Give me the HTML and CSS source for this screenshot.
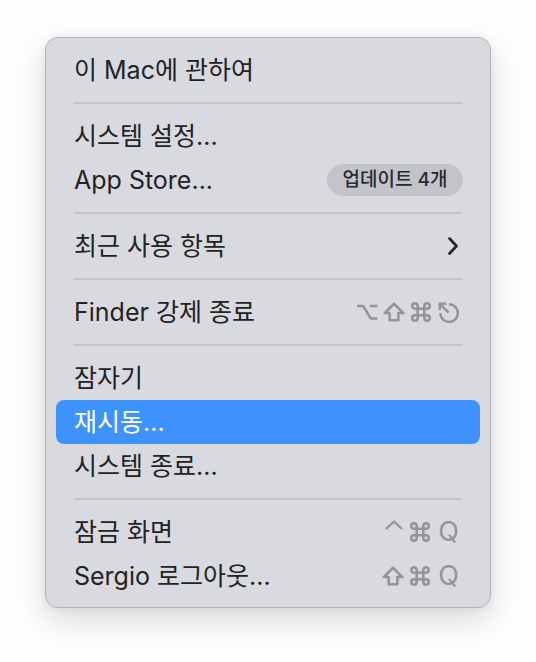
FILE: index.html
```html
<!DOCTYPE html>
<html lang="ko">
<head>
<meta charset="utf-8">
<title>Apple menu</title>
<link rel="stylesheet" href="styles.css">
</head>
<body>
<div class="stage">
<div class="menu">
  <div class="item"><span class="label">이 Mac에 관하여</span></div>
  <div class="sep"></div>
  <div class="item"><span class="label">시스템 설정...</span></div>
  <div class="item"><span class="label">App Store...</span><span class="badge">업데이트 4개</span></div>
  <div class="sep"></div>
  <div class="item"><span class="label">최근 사용 항목</span>
    <svg class="chev" viewBox="0 0 12 20" width="12" height="20"><path d="M2.5 2.5 L9.5 10 L2.5 17.5"/></svg>
  </div>
  <div class="sep"></div>
  <div class="item"><span class="label">Finder 강제 종료</span>
    <span class="keys">
      <svg class="key" viewBox="0 0 20 20" width="22" height="22"><path d="M1 4.5 H6.5 L13.5 16 H19.5 M12.5 4.5 H19.5"/></svg>
      <svg class="key" viewBox="0 0 20 20" width="22" height="22"><path d="M10 2.5 L18.5 11 H14 V17.5 H6 V11 H1.5 Z"/></svg>
      <svg class="key" viewBox="0 0 20 20" width="22" height="22"><path d="M7 7V4.5A2.5 2.5 0 1 0 4.5 7H7Zm0 0v6m0-6h6m-6 6H4.5A2.5 2.5 0 1 0 7 15.5V13Zm0 0h6m0 0v2.5a2.5 2.5 0 1 0 2.5-2.5H13Zm0 0V7m0 0h2.5A2.5 2.5 0 1 0 13 4.5V7Z"/></svg>
      <svg class="key" viewBox="0 0 20 20" width="22" height="22"><path d="M11 3 A8 8 0 1 1 3 11 M10.5 10.5 L3 3 M2.5 8.5 V2.5 H8.5"/></svg>
    </span>
  </div>
  <div class="sep"></div>
  <div class="item"><span class="label">잠자기</span></div>
  <div class="item active"><span class="label">재시동...</span></div>
  <div class="item"><span class="label">시스템 종료...</span></div>
  <div class="sep"></div>
  <div class="item"><span class="label">잠금 화면</span>
    <span class="keys">
      <svg class="key ctrl" viewBox="0 0 20 20" width="20" height="20"><path d="M2 10 L10 2.5 L18 10"/></svg>
      <svg class="key" viewBox="0 0 20 20" width="22" height="22"><path d="M7 7V4.5A2.5 2.5 0 1 0 4.5 7H7Zm0 0v6m0-6h6m-6 6H4.5A2.5 2.5 0 1 0 7 15.5V13Zm0 0h6m0 0v2.5a2.5 2.5 0 1 0 2.5-2.5H13Zm0 0V7m0 0h2.5A2.5 2.5 0 1 0 13 4.5V7Z"/></svg>
      <span class="q">Q</span>
    </span>
  </div>
  <div class="item"><span class="label">Sergio 로그아웃...</span>
    <span class="keys">
      <svg class="key" viewBox="0 0 20 20" width="22" height="22"><path d="M10 2.5 L18.5 11 H14 V17.5 H6 V11 H1.5 Z"/></svg>
      <svg class="key" viewBox="0 0 20 20" width="22" height="22"><path d="M7 7V4.5A2.5 2.5 0 1 0 4.5 7H7Zm0 0v6m0-6h6m-6 6H4.5A2.5 2.5 0 1 0 7 15.5V13Zm0 0h6m0 0v2.5a2.5 2.5 0 1 0 2.5-2.5H13Zm0 0V7m0 0h2.5A2.5 2.5 0 1 0 13 4.5V7Z"/></svg>
      <span class="q">Q</span>
    </span>
  </div>
</div>
</div>
</body>
</html>
```

FILE: styles.css
```css
html, body {
  margin: 0;
  padding: 0;
  background: #ffffff;
}
body {
  font-family: "Inter", "Noto Sans CJK KR", sans-serif;
  color: #232323;
}
.stage {
  box-sizing: border-box;
  width: 536px;
  height: 662px;
  padding: 37px 0 0 45px;
  background: #fefefe;
}
.menu {
  box-sizing: border-box;
  width: 446px;
  padding: 10px 10px 9px;
  background: #d9d9e0;
  border: 1px solid #b3b3b8;
  border-radius: 13px;
  box-shadow: 0 12px 34px rgba(0, 0, 0, 0.15), 0 1px 8px rgba(0, 0, 0, 0.06);
}
.item {
  height: 44px;
  display: flex;
  align-items: center;
  justify-content: space-between;
  padding: 0 17px 0 18px;
  border-radius: 8px;
  font-size: 25px;
  line-height: 44px;
}
.item.active {
  background: #3d92fc;
  color: #ffffff;
}
.label {
  white-space: nowrap;
}
.sep {
  height: 2px;
  margin: 10px 18px;
  background: #c4c4cb;
}
.badge {
  display: flex;
  align-items: center;
  justify-content: center;
  height: 32px;
  width: 136px;
  border-radius: 16px;
  background: #c3c3ca;
  font-size: 19px;
  font-weight: 500;
  line-height: 32px;
  color: #2a2a2a;
}
.chev {
  fill: none;
  stroke: #2a2a2a;
  stroke-width: 2.8;
  stroke-linecap: round;
  stroke-linejoin: round;
  margin-right: 4px;
}
.keys {
  display: flex;
  align-items: center;
  gap: 5px;
  margin-right: 4px;
}
.key {
  fill: none;
  stroke: #939399;
  stroke-width: 2.3;
  stroke-linejoin: round;
  display: block;
}
.key.ctrl {
  align-self: flex-start;
  margin-top: 9px;
}
.q {
  font-size: 27px;
  color: #939399;
  line-height: 44px;
  margin-left: 2px;
}
```
